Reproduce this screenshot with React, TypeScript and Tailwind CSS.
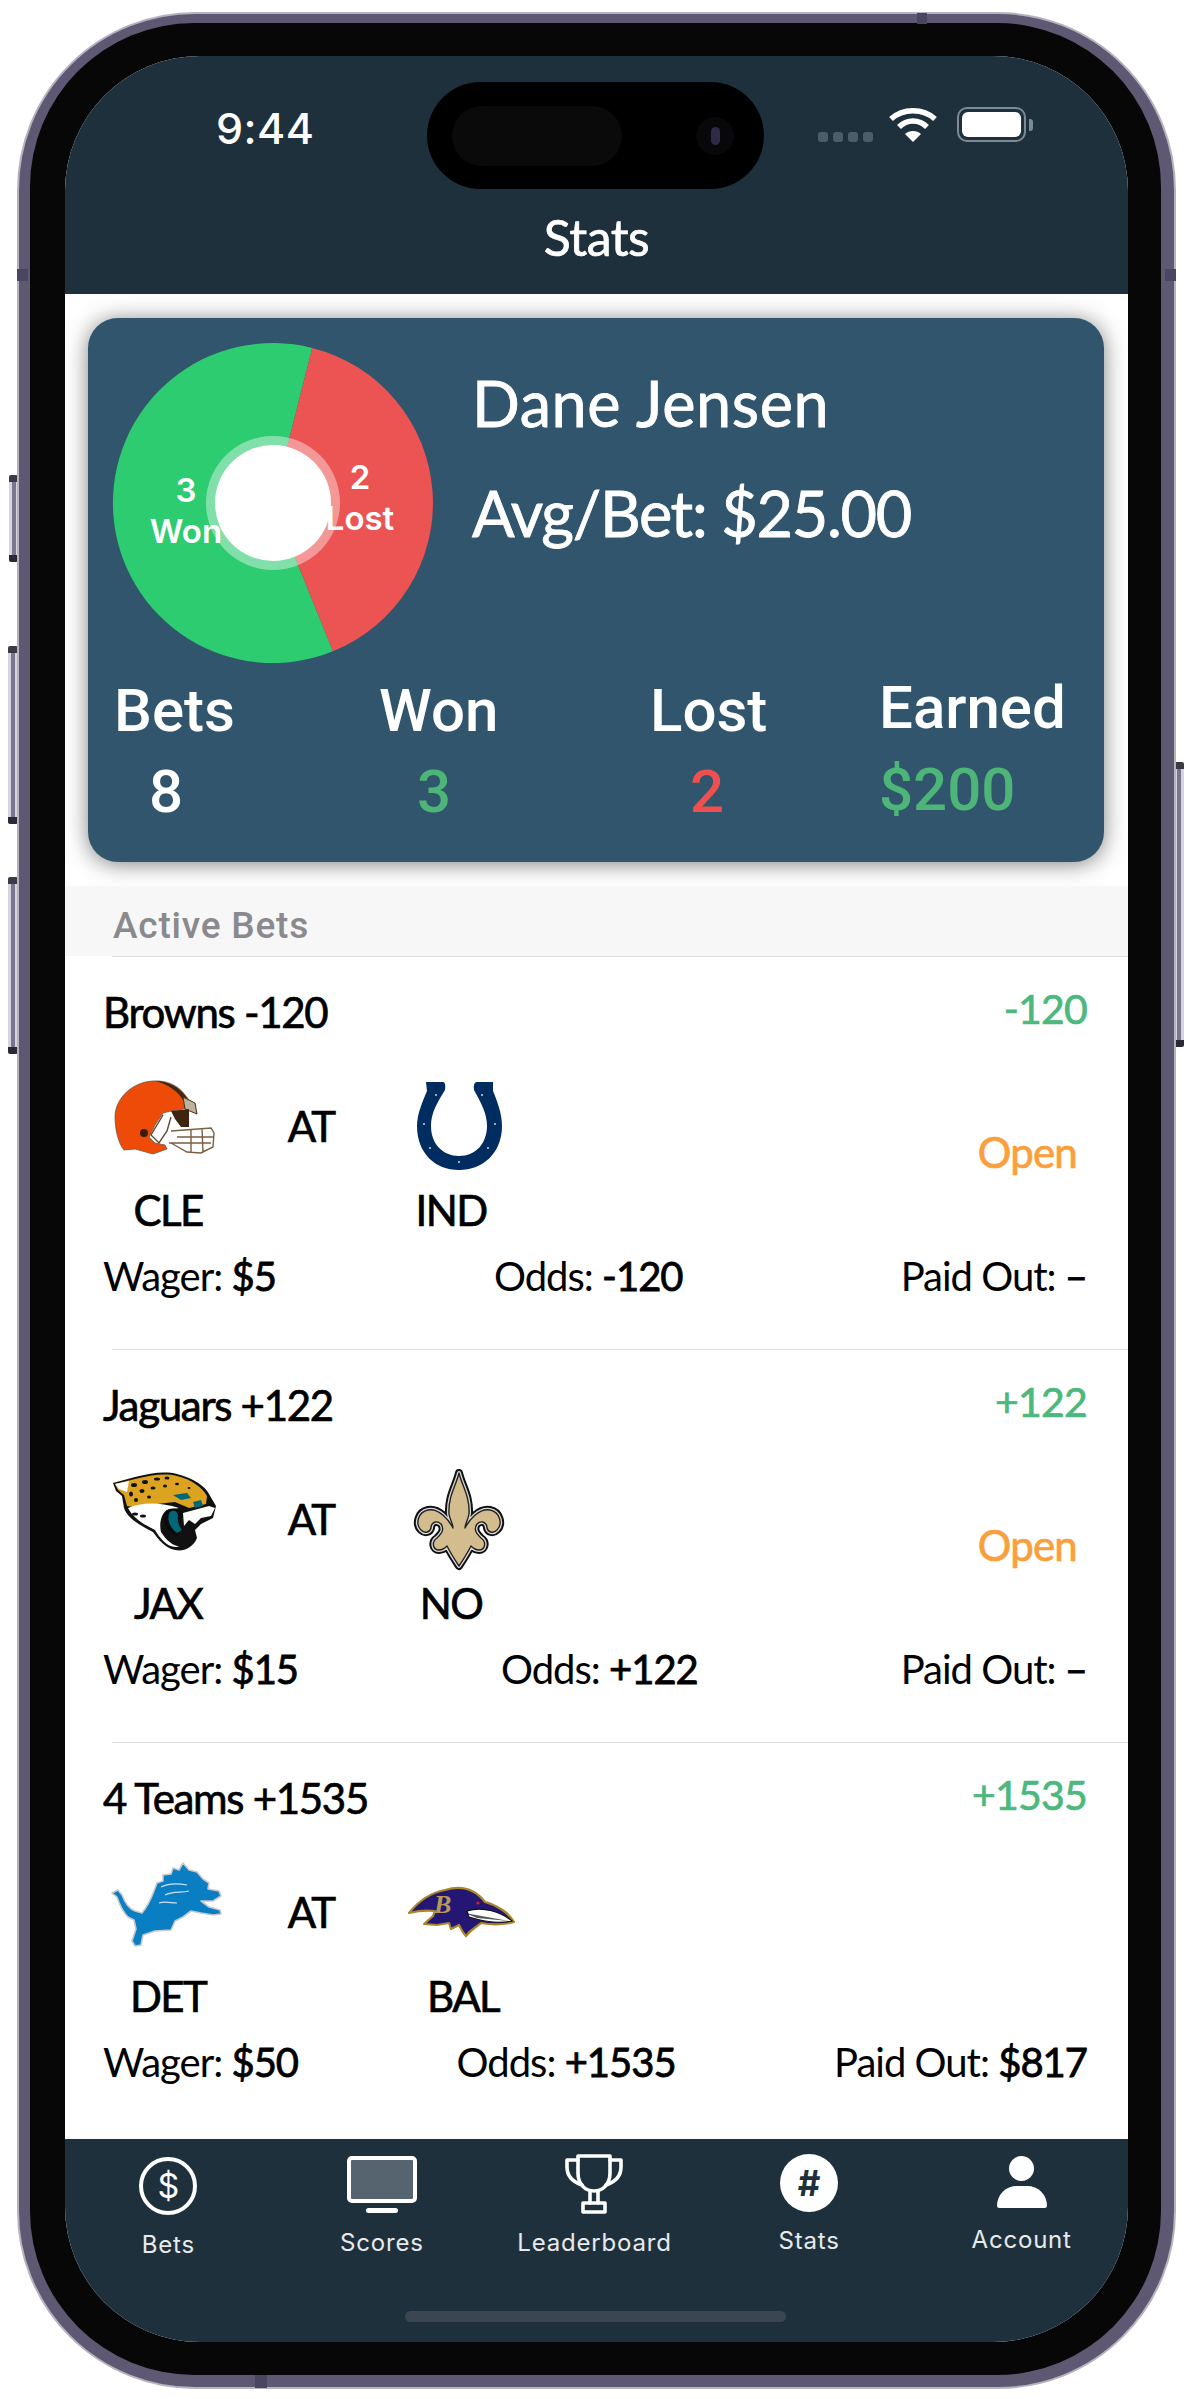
import React from "react";

const Helmet = () => (
  <svg viewBox="0 0 120 110" className="w-[120px] h-[110px]">
    <path d="M48 10 C62 9 74 15 80 24 L88 34 L78 38 L66 40 L58 42 L50 54 L44 66 L50 72 L60 74 L62 78 L48 83 L30 78 L19 79 C13 72 10 58 10 45 C11 26 28 11 48 10Z" fill="#ee4a08" stroke="#6b5a48" strokeWidth="0.8" />
    <path d="M50 10 C64 10 76 17 82 27 L78 29 C72 19 62 13 50 10Z" fill="#3f2a17" />
    <path d="M78 26 L90 32 L92 43 L80 38Z" fill="#bdb39d" stroke="#4a2c17" strokeWidth="1" />
    <path d="M66 40 L84 38 L84 56 L76 56 L70 48Z" fill="#3f2510" />
    <circle cx="39" cy="62" r="4" fill="#3a1c08" />
    <path d="M58 44 L46 64 L54 72 L62 60 L66 46" fill="#fff" stroke="#5d4a34" strokeWidth="1.4" />
    <path d="M66 60 L106 57 L109 62 L108 76 L96 82 L82 81 L66 72 M72 66 L108 66 M86 58 L86 81 M97 57 L98 81 M64 72 L106 72" fill="none" stroke="#7a5f42" strokeWidth="1.4" />
  </svg>
);

const Horseshoe = () => (
  <svg viewBox="0 0 120 110" className="w-[120px] h-[110px]">
    <path d="M21 11 H38 Q41 11 40 19 C32 32 26 42 26 55 C26 73 38 85 54 85 C71 85 82 72 82 55 C82 42 76 32 69 19 Q68 11 72 11 H88 V20 C92 30 97 42 97 55 C97 82 78 99 54 99 C30 99 12 82 12 55 C12 42 18 30 22 20Z" fill="#002c5f" />
    <g fill="#c9d3de">
      <circle cx="31" cy="24" r="1" />
      <circle cx="77" cy="24" r="1" />
      <circle cx="19" cy="53" r="1" />
      <circle cx="90" cy="53" r="1" />
      <circle cx="25" cy="77" r="1" />
      <circle cx="83" cy="77" r="1" />
      <circle cx="54" cy="91" r="1" />
    </g>
  </svg>
);

const Jaguar = () => (
  <svg viewBox="0 0 120 110" className="w-[120px] h-[110px]">
    <path d="M8 19 L30 13 C46 9 60 7 72 10 C88 14 100 22 104 30 L111 42 L108 54 L96 60 L90 66 L92 74 C88 84 78 88 70 86 C60 84 54 76 48 68 C36 62 22 54 19 44 L17 32 L11 27Z" fill="#111" />
    <path d="M10 20 L30 15 C46 11 60 9 72 12 C86 15 98 24 102 32 L101 40 L84 44 L70 38 L52 40 L34 44 L22 42 L19 31 L13 26Z" fill="#dba31f" />
    <path d="M10 20 L24 17 L22 28 L14 25Z" fill="#fff" />
    <path d="M23 44 C36 38 56 38 74 44 L62 46 C56 50 54 60 56 68 C62 78 72 84 76 82 C64 86 56 76 50 66 C38 60 28 54 23 44Z" fill="#fff" />
    <path d="M60 48 C64 42 76 44 80 50 L74 56 L78 66 L72 72 C62 68 56 58 60 48Z" fill="#0b0b0b" />
    <path d="M64 50 C66 45 72 46 73 51 C72 57 74 62 77 66 L72 69 C65 64 62 56 64 50Z" fill="#006778" />
    <path d="M78 49 L104 42 L110 44 L106 52 L96 54 L90 60 L84 56 L79 62Z" fill="#fff" />
    <path d="M68 31 L82 29 L86 34 L76 36Z" fill="#006778" />
    <path d="M88 38 L96 36 L98 42 L90 44Z" fill="#006778" />
    <g fill="#111">
      <ellipse cx="29" cy="21" rx="3" ry="2" />
      <ellipse cx="40" cy="18" rx="3" ry="2" />
      <ellipse cx="52" cy="15" rx="3" ry="1.5" />
      <ellipse cx="62" cy="14" rx="2.5" ry="1.5" />
      <ellipse cx="26" cy="30" rx="2" ry="2.5" />
      <ellipse cx="37" cy="27" rx="2.5" ry="2" />
      <ellipse cx="48" cy="24" rx="2.5" ry="1.5" />
      <ellipse cx="60" cy="22" rx="2" ry="1.5" />
      <ellipse cx="31" cy="36" rx="2" ry="2" />
      <ellipse cx="44" cy="33" rx="2" ry="1.5" />
      <ellipse cx="72" cy="20" rx="2" ry="1.2" />
      <ellipse cx="84" cy="24" rx="1.5" ry="1" />
      <ellipse cx="30" cy="50" rx="3" ry="1.5" />
      <ellipse cx="38" cy="52" rx="3" ry="1.5" />
    </g>
  </svg>
);

const fleur =
  "M54 9 C57 22 65 32 64 50 C63 56 60 60 60 64 C64 56 74 44 85 46 C95 48 98 60 92 66 C88 70 83 68 82 64 C82 58 76 56 72 60 C68 66 72 70 76 74 C82 78 80 86 74 86 C70 86 68 84 66 82 C64 86 62 90 54 102 C46 90 44 86 42 82 C40 84 38 86 34 86 C28 86 26 78 32 74 C36 70 40 66 36 60 C32 56 26 58 26 64 C25 68 20 70 16 66 C10 60 13 48 23 46 C34 44 44 56 48 64 C48 60 45 56 44 50 C43 32 51 22 54 9Z";

const Saints = () => (
  <svg viewBox="0 0 120 110" className="w-[120px] h-[110px]">
    <path d={fleur} fill="#d3bc8d" stroke="#111" strokeWidth="8" strokeLinejoin="round" />
    <path d={fleur} fill="#d3bc8d" stroke="#d8d8d8" strokeWidth="4" strokeLinejoin="round" />
    <path d={fleur} fill="#d3bc8d" stroke="#222" strokeWidth="1.4" strokeLinejoin="round" />
  </svg>
);

const Lion = () => (
  <svg viewBox="0 0 120 110" className="w-[120px] h-[110px]">
    <path d="M7 36 L13 33 L17 38 C20 46 24 52 30 54 L37 56 C42 50 46 42 49 34 L52 26 L58 24 L58 18 L66 17 L68 11 L74 13 L78 6 L84 13 L92 15 L98 22 L104 26 L103 32 L114 34 L116 39 L108 44 L96 44 L104 50 L115 53 L116 57 L108 58 L96 56 L86 54 L78 60 L70 64 L66 73 L50 74 L38 78 L36 88 L30 89 L27 84 L31 72 L29 63 L23 60 C17 54 14 46 12 40Z" fill="#0a7ec2" stroke="#c5c9cc" strokeWidth="1.6" strokeLinejoin="round" />
    <path d="M56 30 C64 26 72 26 82 28 M60 38 C68 34 76 36 84 34 M54 46 C60 44 66 46 72 46" fill="none" stroke="#c9e3f3" strokeWidth="1.2" />
  </svg>
);

const Raven = () => (
  <svg viewBox="0 0 120 110" className="w-[120px] h-[110px]">
    <path d="M4 56 C12 46 24 36 40 33 C56 28 70 32 80 45 C92 48 104 56 109 65 C98 68 86 68 76 66 C72 70 66 72 61 79 C58 76 56 72 54 68 L46 72 L44 66 L32 68 L19 67 L28 59 L30 54 C22 53 12 54 4 56Z" fill="#241773" stroke="#a9862a" strokeWidth="2.2" strokeLinejoin="round" />
    <path d="M62 54 C78 49 96 55 107 64 C94 67 80 65 64 60Z" fill="#fff" stroke="#111" strokeWidth="1.2" />
    <path d="M60 56 L104 64 L72 61Z" fill="#111" opacity="0.7" />
    <circle cx="73" cy="46" r="1.6" fill="#d8202a" />
    <text x="29" y="56" fontFamily="Liberation Serif, serif" fontStyle="italic" fontWeight="700" fontSize="26" fill="#b59a57">B</text>
  </svg>
);

type Bet = {
  title: string;
  odds: string;
  open: boolean;
  left: React.ReactNode;
  right: React.ReactNode;
  away: string;
  home: string;
  homeClass: string;
  wager: string;
  paid: string;
};

const bets: Bet[] = [
  { title: "Browns -120", odds: "-120", open: true, left: <Helmet />, right: <Horseshoe />, away: "CLE", home: "IND", homeClass: "w-[140px]", wager: "$5", paid: "–" },
  { title: "Jaguars +122", odds: "+122", open: true, left: <Jaguar />, right: <Saints />, away: "JAX", home: "NO", homeClass: "w-[140px]", wager: "$15", paid: "–" },
  { title: "4 Teams +1535", odds: "+1535", open: false, left: <Lion />, right: <Raven />, away: "DET", home: "BAL", homeClass: "w-[164px]", wager: "$50", paid: "$817" },
];

const BetRow = ({ bet }: { bet: Bet }) => (
  <div className="h-[393px] flex flex-col font-[Lato,sans-serif] text-black">
    <div className="h-px ml-[47px] bg-[#dcdcdc]" />
    <div className="h-[114px] pl-[38px] pr-[41px] pt-[32px] flex justify-between items-start">
      <span className="text-[42px] leading-[46px] tracking-[-1.3px] [-webkit-text-stroke:0.7px_black]">{bet.title}</span>
      <span className="text-[41px] leading-[40px] tracking-[-0.8px] text-[#4db87d] [-webkit-text-stroke:0.7px_#4db87d]">{bet.odds}</span>
    </div>
    <div className="h-[110px] pl-[40px] pr-[51px] flex items-start">
      <div className="w-[120px] h-[110px]">{bet.left}</div>
      <div className="w-[172px] h-[110px] flex items-center justify-center text-[42px] tracking-[-2px] [-webkit-text-stroke:0.7px_black]">AT</div>
      <div className="ml-[8px] w-[120px] h-[110px]">{bet.right}</div>
      <div className="flex-1 text-right pt-[58px] text-[42px] leading-[46px] tracking-[-0.8px] text-[#fb9e3c] [-webkit-text-stroke:0.7px_#fb9e3c]">
        {bet.open ? "Open" : ""}
      </div>
    </div>
    <div className="h-[46px] mt-[6px] pl-[38px] flex text-[42px] leading-[46px] tracking-[-1.6px] [-webkit-text-stroke:0.7px_black]">
      <span className="w-[130px] text-center">{bet.away}</span>
      <span className="ml-[148px] w-[140px] text-center">
        <span className={`inline-block text-center ${bet.homeClass}`}>{bet.home}</span>
      </span>
    </div>
    <div className="mt-[20px] h-[46px] pl-[38px] pr-[41px] flex justify-between items-center text-[40px] leading-[46px] tracking-[-1px]">
      <span>Wager: <b className="font-normal [-webkit-text-stroke:0.8px_black]">{bet.wager}</b></span>
      <span>Odds: <b className="font-normal [-webkit-text-stroke:0.8px_black]">{bet.odds}</b></span>
      <span>Paid Out: <b className="font-normal [-webkit-text-stroke:0.8px_black]">{bet.paid}</b></span>
    </div>
  </div>
);

const Trophy = () => (
  <svg viewBox="0 0 62 62" className="w-[62px] h-[62px]" fill="none" stroke="#fff" strokeWidth="3.6" strokeLinejoin="round" strokeLinecap="round">
    <path d="M15 3 H47 V20 C47 31 40 38 31 38 C22 38 15 31 15 20Z" />
    <path d="M15 7 H4 V14 C4 23 10 29 19 32" />
    <path d="M47 7 H58 V14 C58 23 52 29 43 32" />
    <path d="M27 38 V50 M35 38 V50" />
    <path d="M20 50 H42 V59 H20Z" />
  </svg>
);

const tabs = [
  {
    label: "Bets",
    labelClass: "mt-[16px]",
    colClass: "-translate-x-[3px]",
    icon: (
      <div className="w-[58px] h-[58px] mt-[4px] rounded-full border-[4px] border-white flex items-center justify-center text-white text-[34px] leading-none font-[Inter,sans-serif] font-normal">$</div>
    ),
  },
  {
    label: "Scores",
    labelClass: "mt-[14px]",
    colClass: "-translate-x-[2px]",
    icon: (
      <div className="mt-[3px] flex flex-col items-center">
        <div className="w-[70px] h-[47px] rounded-[5px] border-[4px] border-white bg-[#56646f]" />
        <div className="w-[32px] h-[5px] mt-[5px] rounded-full bg-white" />
      </div>
    ),
  },
  { label: "Leaderboard", labelClass: "mt-[14px]", colClass: "-translate-x-[2px]", icon: <Trophy /> },
  {
    label: "Stats",
    labelClass: "mt-[12px]",
    colClass: "",
    icon: (
      <div className="w-[58px] h-[58px] mt-[1px] rounded-full bg-white flex items-center justify-center text-[#1e303c] text-[35px] leading-none font-[Inter,sans-serif] font-bold">#</div>
    ),
  },
  {
    label: "Account",
    labelClass: "mt-[11px]",
    colClass: "",
    icon: (
      <div className="mt-[3px] flex flex-col items-center">
        <div className="w-[25px] h-[25px] rounded-full bg-white" />
        <div className="w-[50px] h-[22px] mt-[5px] rounded-t-[25px] rounded-b-[3px] bg-white" />
      </div>
    ),
  },
];

const Wifi = () => (
  <svg viewBox="0 0 48 36" className="w-[48px] h-[36px]" fill="none" stroke="#fff" strokeWidth="5.5">
    <path d="M2 12 C14 1 34 1 46 12" />
    <path d="M10 20 C18 12 30 12 38 20" />
    <path d="M24 35 L16 27 C20 23 28 23 32 27Z" fill="#fff" stroke="none" />
  </svg>
);

const SideButton = ({ place }: { place: string }) => (
  <div className={`absolute flex flex-col ${place}`}>
    <div className="h-[7px] bg-[#3d3a48] rounded-t-[2px]" />
    <div className="flex-1 bg-[#d6d4df] pl-[3px] pr-[1px]">
      <div className="w-[4px] h-full bg-[#7b7690]" />
    </div>
    <div className="h-[7px] bg-[#2b2935] rounded-b-[2px]" />
  </div>
);

export default function App() {
  return (
    <div className="w-[1192px] h-[2399px] bg-white pl-[17px] pt-[12px] overflow-hidden relative">
      <SideButton place="left-[9px] top-[475px] w-[9px] h-[87px]" />
      <SideButton place="left-[8px] top-[646px] w-[10px] h-[178px]" />
      <SideButton place="left-[8px] top-[877px] w-[10px] h-[177px]" />
      <SideButton place="left-[1174px] top-[762px] w-[10px] h-[285px]" />

      <div className="relative w-[1159px] h-[2377px] rounded-[178px] bg-[#5f5873] border-[2px] border-[#b6b3c0] pl-[11px] pr-[13px] pt-[9px] pb-[12px]">
        <div className="w-full h-full rounded-[164px] bg-[#070707] pl-[35px] pr-[33px] pt-[33px] pb-[33px]">
          <div className="relative w-full h-full rounded-[135px] overflow-hidden flex flex-col bg-white">
            {/* header */}
            <div className="h-[238px] bg-[#1e303c] relative flex flex-col shrink-0">
              <div className="h-[134px] flex pl-[151px] pt-[50px] relative">
                <span className="text-white text-[43px] leading-[44px] font-[Inter,sans-serif] font-medium tracking-[0.5px]">9:44</span>
                <div className="absolute left-[362px] top-[26px] w-[337px] h-[107px] rounded-[54px] bg-black flex items-center pl-[25px] pr-[30px] justify-between">
                  <div className="w-[170px] h-[60px] rounded-[30px] bg-[#0a0a0a]" />
                  <div className="w-[38px] h-[38px] rounded-full bg-[#08080a] flex items-center justify-center">
                    <div className="w-[9px] h-[18px] rounded-full bg-[#2f2a4a]" />
                  </div>
                </div>
                <div className="absolute left-[753px] top-[76px] flex gap-[5px]">
                  <div className="w-[10px] h-[10px] rounded-[3px] bg-[#4c5d69]" />
                  <div className="w-[10px] h-[10px] rounded-[3px] bg-[#4c5d69]" />
                  <div className="w-[10px] h-[10px] rounded-[3px] bg-[#4c5d69]" />
                  <div className="w-[10px] h-[10px] rounded-[3px] bg-[#4c5d69]" />
                </div>
                <div className="absolute left-[824px] top-[51px]"><Wifi /></div>
                <div className="absolute left-[892px] top-[51px] flex items-center">
                  <div className="w-[69px] h-[35px] rounded-[10px] border-[2px] border-[#7d8a93] p-[3px]">
                    <div className="w-full h-full rounded-[6px] bg-white" />
                  </div>
                  <div className="w-[4px] h-[12px] ml-[3px] rounded-r-[3px] bg-[#7d8a93]" />
                </div>
              </div>
              <div className="flex justify-center pt-[20px] text-white text-[50px] leading-[54px] font-[Lato,sans-serif] tracking-[-0.5px] [-webkit-text-stroke:0.7px_white]">Stats</div>
            </div>

            {/* content */}
            <div className="flex-1 min-h-0 flex flex-col bg-white">
              <div className="mt-[24px] ml-[23px] mr-[24px] h-[544px] rounded-[30px] bg-[#31556d] shadow-[0_2px_22px_rgba(0,0,0,0.5)] pl-[24px] pt-[25px] flex flex-col shrink-0">
                <div className="flex">
                  <div className="relative w-[322px] h-[320px] shrink-0">
                    <svg viewBox="0 0 322 320" className="w-[322px] h-[320px]">
                      <path d="M161 160 L221 308.3 A160 160 0 1 1 200.2 4.9Z" fill="#2ecc71" />
                      <path d="M161 160 L200.2 4.9 A160 160 0 0 1 221 308.3Z" fill="#ec5353" />
                      <circle cx="161" cy="160" r="67" fill="#fff" fillOpacity="0.4" />
                      <circle cx="161" cy="160" r="58" fill="#fff" />
                    </svg>
                    <div className="absolute left-[24px] top-[127px] w-[100px] text-center text-white text-[33px] leading-[41px] font-[Inter,sans-serif] font-semibold">
                      <div>3</div>
                      <div>Won</div>
                    </div>
                    <div className="absolute left-[198px] top-[114px] w-[100px] text-center text-white text-[33px] leading-[41px] font-[Inter,sans-serif] font-semibold">
                      <div>2</div>
                      <div>Lost</div>
                    </div>
                  </div>
                  <div className="ml-[38px] pt-[20px] text-white font-[Lato,sans-serif] [-webkit-text-stroke:0.8px_white]">
                    <div className="text-[63px] leading-[80px] tracking-[0.6px]">Dane Jensen</div>
                    <div className="text-[63px] leading-[80px] mt-[30px] tracking-[-1.3px] whitespace-nowrap">Avg/Bet: $25.00</div>
                  </div>
                </div>
                <div className="mt-[15px] flex font-[Roboto,sans-serif] font-medium text-white text-[60px] leading-[66px]">
                  <div className="w-[267px] pl-[2px]">
                    <div>Bets</div>
                    <div className="pl-[35px] mt-[15px]">8</div>
                  </div>
                  <div className="w-[271px]">
                    <div>Won</div>
                    <div className="pl-[38px] mt-[15px] text-[#4cb577]">3</div>
                  </div>
                  <div className="w-[229px]">
                    <div>Lost</div>
                    <div className="pl-[40px] mt-[15px] text-[#ef4f4f]">2</div>
                  </div>
                  <div className="-mt-[3px]">
                    <div>Earned</div>
                    <div className="mt-[16px] text-[#4cb577]">$200</div>
                  </div>
                </div>
              </div>

              <div className="mt-[24px] h-[70px] bg-[#f7f7f7] pl-[48px] flex items-center shrink-0">
                <span className="text-[37px] leading-[40px] text-[#8a8a8e] font-[Roboto,sans-serif] font-medium pt-[10px] tracking-[0.8px]">Active Bets</span>
              </div>

              {bets.map((b) => (
                <BetRow key={b.title} bet={b} />
              ))}
            </div>

            {/* tabs */}
            <div className="h-[203px] shrink-0 bg-[#1e303c] relative flex pt-[14px]">
              {tabs.map((t) => (
                <div key={t.label} className={`flex-1 flex flex-col items-center ${t.colClass}`}>
                  <div className="h-[62px] flex items-start">{t.icon}</div>
                  <span className={`text-white/90 text-[24px] leading-[28px] font-[Inter,sans-serif] tracking-[0.8px] ${t.labelClass}`}>{t.label}</span>
                </div>
              ))}
              <div className="absolute left-[340px] bottom-[20px] w-[381px] h-[11px] rounded-full bg-[#3a4650]" />
            </div>
          </div>
        </div>
        <div className="absolute left-[898px] top-[-1px] w-[10px] h-[11px] bg-[#4a4560]" />
        <div className="absolute left-[-2px] top-[255px] w-[11px] h-[12px] bg-[#4a4560]" />
        <div className="absolute right-[-2px] top-[255px] w-[11px] h-[12px] bg-[#4a4560]" />
        <div className="absolute left-[236px] bottom-[-1px] w-[12px] h-[13px] bg-[#4a4560]" />
      </div>
    </div>
  );
}
